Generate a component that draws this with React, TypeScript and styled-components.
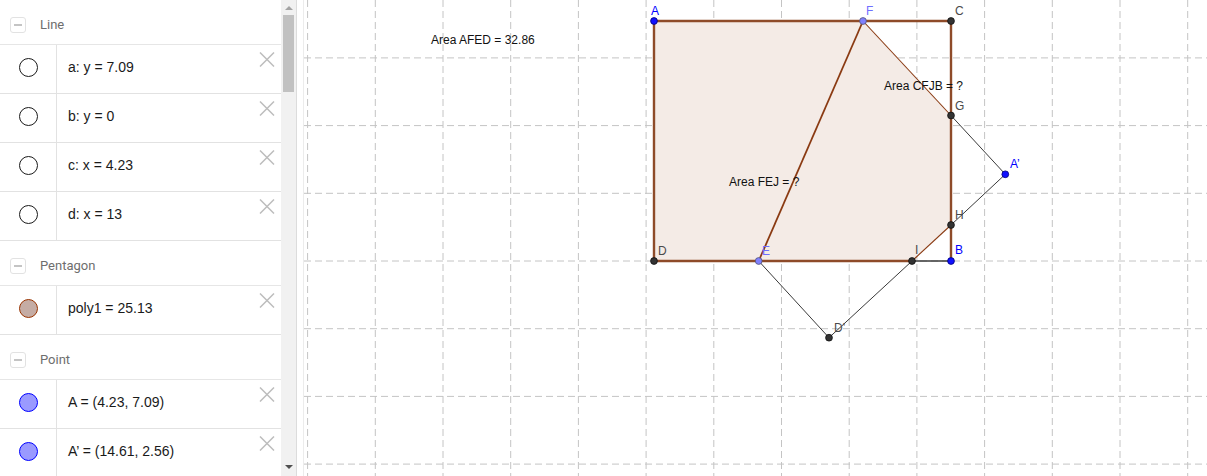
import React from 'react';
import styled, { createGlobalStyle } from 'styled-components';

type Marker = 'line' | 'polygon' | 'point';

interface Item {
  marker: Marker;
  text: string;
}

interface Group {
  title: string;
  items: Item[];
}

const groups: Group[] = [
  {
    title: 'Line',
    items: [
      { marker: 'line', text: 'a: y = 7.09' },
      { marker: 'line', text: 'b: y = 0' },
      { marker: 'line', text: 'c: x = 4.23' },
      { marker: 'line', text: 'd: x = 13' },
    ],
  },
  { title: 'Pentagon', items: [{ marker: 'polygon', text: 'poly1 = 25.13' }] },
  {
    title: 'Point',
    items: [
      { marker: 'point', text: 'A = (4.23, 7.09)' },
      { marker: 'point', text: 'A\u2019 = (14.61, 2.56)' },
    ],
  },
];

// world -> screen: 33.85px per unit, origin at (510.7, 261)
const gridX = Array.from({ length: 14 }, (_, k) => 510.7 + (k - 3) * 67.7);
const gridY = Array.from({ length: 7 }, (_, k) => 261 + (k - 3) * 67.7);

const P = {
  A: [654, 21],
  C: [951, 21],
  F: [863, 21],
  G: [951, 115.5],
  Ap: [1005.3, 174.3],
  H: [951, 225],
  B: [951, 261],
  J: [912, 261],
  E: [758.7, 261],
  Dp: [829, 337.7],
  D: [654, 261],
} as const;

type Key = keyof typeof P;

const BROWN = '#8e4b29';
const BROWN_THIN = '#8a3a12';
const DARK = '#3a3a3a';

const points: { key: Key; fill: string; stroke: string }[] = [
  { key: 'A', fill: '#1010ff', stroke: '#00007a' },
  { key: 'B', fill: '#1010ff', stroke: '#00007a' },
  { key: 'Ap', fill: '#1010ff', stroke: '#00007a' },
  { key: 'F', fill: '#8080ff', stroke: '#555577' },
  { key: 'E', fill: '#8080ff', stroke: '#555577' },
  { key: 'C', fill: '#333', stroke: '#111' },
  { key: 'G', fill: '#333', stroke: '#111' },
  { key: 'H', fill: '#333', stroke: '#111' },
  { key: 'J', fill: '#333', stroke: '#111' },
  { key: 'D', fill: '#333', stroke: '#111' },
  { key: 'Dp', fill: '#333', stroke: '#111' },
];

const labels: { text: string; x: number; y: number; color: string }[] = [
  { text: 'A', x: 651, y: 15, color: '#0000ff' },
  { text: 'F', x: 866, y: 15, color: '#6f6fff' },
  { text: 'C', x: 955, y: 15, color: '#4a4a4a' },
  { text: 'G', x: 955, y: 110, color: '#4a4a4a' },
  { text: 'A\u2019', x: 1010, y: 168, color: '#0000ff' },
  { text: 'H', x: 955, y: 219, color: '#4a4a4a' },
  { text: 'B', x: 955, y: 254, color: '#0000ff' },
  { text: 'I', x: 915, y: 254, color: '#4a4a4a' },
  { text: 'E', x: 762, y: 255, color: '#6f6fff' },
  { text: 'D', x: 658, y: 255, color: '#4a4a4a' },
  { text: 'D\u2019', x: 834, y: 332, color: '#4a4a4a' },
];

const captions = [
  { text: 'Area AFED = 32.86', x: 431, y: 44 },
  { text: 'Area CFJB = ?', x: 884, y: 90 },
  { text: 'Area FEJ = ?', x: 729, y: 186 },
];

const seg = (a: Key, b: Key) => ({ x1: P[a][0], y1: P[a][1], x2: P[b][0], y2: P[b][1] });
const poly = (keys: Key[]) => keys.map((k) => P[k].join(',')).join(' ');

export default function App() {
  return (
    <>
      <GlobalStyle />
      <Page>
        <Sidebar>
          <List>
            {groups.map((g) => (
              <React.Fragment key={g.title}>
                <Header>
                  <Toggle />
                  <HeaderTitle>{g.title}</HeaderTitle>
                </Header>
                {g.items.map((it) => (
                  <Row key={it.text}>
                    <IconCell>
                      <Dot $kind={it.marker} />
                    </IconCell>
                    <Value>{it.text}</Value>
                    <DeleteButton aria-label="delete">
                      <svg width="16" height="15" viewBox="0 0 16 15">
                        <path d="M1 0.5 L15 14.5 M15 0.5 L1 14.5" stroke="#bdbdbd" strokeWidth="1.5" fill="none" />
                      </svg>
                    </DeleteButton>
                  </Row>
                ))}
              </React.Fragment>
            ))}
          </List>
          <Scrollbar>
            <ArrowUp />
            <Thumb />
            <ArrowDown />
          </Scrollbar>
        </Sidebar>
        <Splitter />
        <Canvas>
          <svg width="903" height="476" viewBox="304 0 903 476">
            <g stroke="#c4c4c4" strokeWidth="1" strokeDasharray="7 4">
              {gridX.map((x) => (
                <line key={'v' + x} x1={x} y1={0} x2={x} y2={476} />
              ))}
              {gridY.map((y) => (
                <line key={'h' + y} x1={304} y1={y} x2={1207} y2={y} />
              ))}
            </g>

            <polygon points={poly(['A', 'F', 'G', 'H', 'J', 'D'])} fill="#f4ebe6" stroke="none" />

            <g stroke={DARK} strokeWidth="1" fill="none">
              <line {...seg('G', 'Ap')} />
              <line {...seg('Ap', 'H')} />
              <line {...seg('E', 'Dp')} />
              <line {...seg('Dp', 'J')} />
              <line {...seg('J', 'B')} strokeWidth="1.5" />
            </g>

            <g stroke={BROWN_THIN} strokeWidth="1.1" fill="none">
              <line {...seg('F', 'G')} />
              <line {...seg('H', 'J')} />
            </g>

            <g stroke={BROWN} strokeWidth="2.4" fill="none" strokeLinecap="round">
              <line {...seg('A', 'C')} />
              <line {...seg('C', 'B')} />
              <line {...seg('A', 'D')} />
              <line {...seg('D', 'J')} />
            </g>
            <line {...seg('F', 'E')} stroke={BROWN_THIN} strokeWidth="1.8" />

            {points.map((p) => (
              <circle key={p.key} cx={P[p.key][0]} cy={P[p.key][1]} r="3.4" fill={p.fill} stroke={p.stroke} strokeWidth="0.8" />
            ))}

            <g fontFamily="'Liberation Sans', Arial, sans-serif" fontSize="12">
              {labels.map((l) => (
                <text key={l.text} x={l.x} y={l.y} fill={l.color}>
                  {l.text}
                </text>
              ))}
              {captions.map((c) => (
                <text key={c.text} x={c.x} y={c.y} fill="#111">
                  {c.text}
                </text>
              ))}
            </g>
          </svg>
        </Canvas>
      </Page>
    </>
  );
}

const GlobalStyle = createGlobalStyle`
  *, *::before, *::after { box-sizing: border-box; }
  html, body {
    margin: 0;
    padding: 0;
    background: #fff;
    overflow: hidden;
  }
  body {
    font-family: 'Liberation Sans', Arial, sans-serif;
  }
`;

const Page = styled.div`
  display: flex;
  width: 1207px;
  height: 476px;
  overflow: hidden;
`;

const Sidebar = styled.div`
  display: flex;
  width: 297px;
  height: 100%;
  border-right: 1px solid #dcdcdc;
`;

const List = styled.div`
  flex: 1;
  overflow: hidden;
`;

const Header = styled.div`
  display: flex;
  align-items: center;
  height: 45px;
  padding: 5px 0 0 10px;
  border-bottom: 1px solid #e6e6e6;
`;

const Toggle = styled.div`
  position: relative;
  width: 16px;
  height: 16px;
  border: 1px solid #e2e2e2;
  border-radius: 3px;
  display: flex;
  align-items: center;
  justify-content: center;

  &::after {
    content: '';
    width: 8px;
    height: 2px;
    background: #c4c4c4;
  }
`;

const HeaderTitle = styled.span`
  margin-left: 14px;
  font-family: Roboto, 'Liberation Sans', sans-serif;
  font-size: 13px;
  color: #6e6e6e;
`;

const Row = styled.div`
  display: flex;
  height: 49px;
  border-bottom: 1px solid #e2e2e2;
`;

const IconCell = styled.div`
  width: 57px;
  flex-shrink: 0;
  border-right: 1px solid #e2e2e2;
  display: flex;
  align-items: center;
  justify-content: center;
  padding-bottom: 3px;
`;

const markerStyles: Record<Marker, string> = {
  line: 'background: #fff; border: 1.3px solid #1a1a1a;',
  polygon: 'background: #c5aca4; border: 1px solid #993300;',
  point: 'background: #9a9aff; border: 1px solid #0000ff;',
};

const Dot = styled.div<{ $kind: Marker }>`
  width: 19px;
  height: 19px;
  border-radius: 50%;
  ${(p) => markerStyles[p.$kind]}
`;

const Value = styled.div`
  flex: 1;
  display: flex;
  align-items: center;
  padding-left: 11px;
  padding-bottom: 4px;
  font-family: 'Liberation Sans', Arial, sans-serif;
  font-size: 14px;
  color: #1a1a1a;
  white-space: pre;
`;

const DeleteButton = styled.button`
  align-self: flex-start;
  margin: 7px 6px 0 0;
  padding: 0;
  border: none;
  background: none;
  width: 16px;
  height: 15px;
  display: flex;
  cursor: pointer;
`;

const Scrollbar = styled.div`
  width: 15px;
  height: 100%;
  background: #f1f1f1;
  display: flex;
  flex-direction: column;
  align-items: center;
`;

const ArrowUp = styled.div`
  margin-top: 6px;
  width: 0;
  height: 0;
  border-left: 4px solid transparent;
  border-right: 4px solid transparent;
  border-bottom: 4px solid #a3a3a3;
`;

const Thumb = styled.div`
  margin-top: 5px;
  width: 11px;
  height: 77px;
  background: #c1c1c1;
`;

const ArrowDown = styled.div`
  margin-top: auto;
  margin-bottom: 7px;
  width: 0;
  height: 0;
  border-left: 4px solid transparent;
  border-right: 4px solid transparent;
  border-top: 4px solid #505050;
`;

const Splitter = styled.div`
  width: 7px;
  height: 100%;
  border-right: 1px solid #ececec;
`;

const Canvas = styled.div`
  flex: 1;
  height: 100%;
  overflow: hidden;
  display: flex;
`;
